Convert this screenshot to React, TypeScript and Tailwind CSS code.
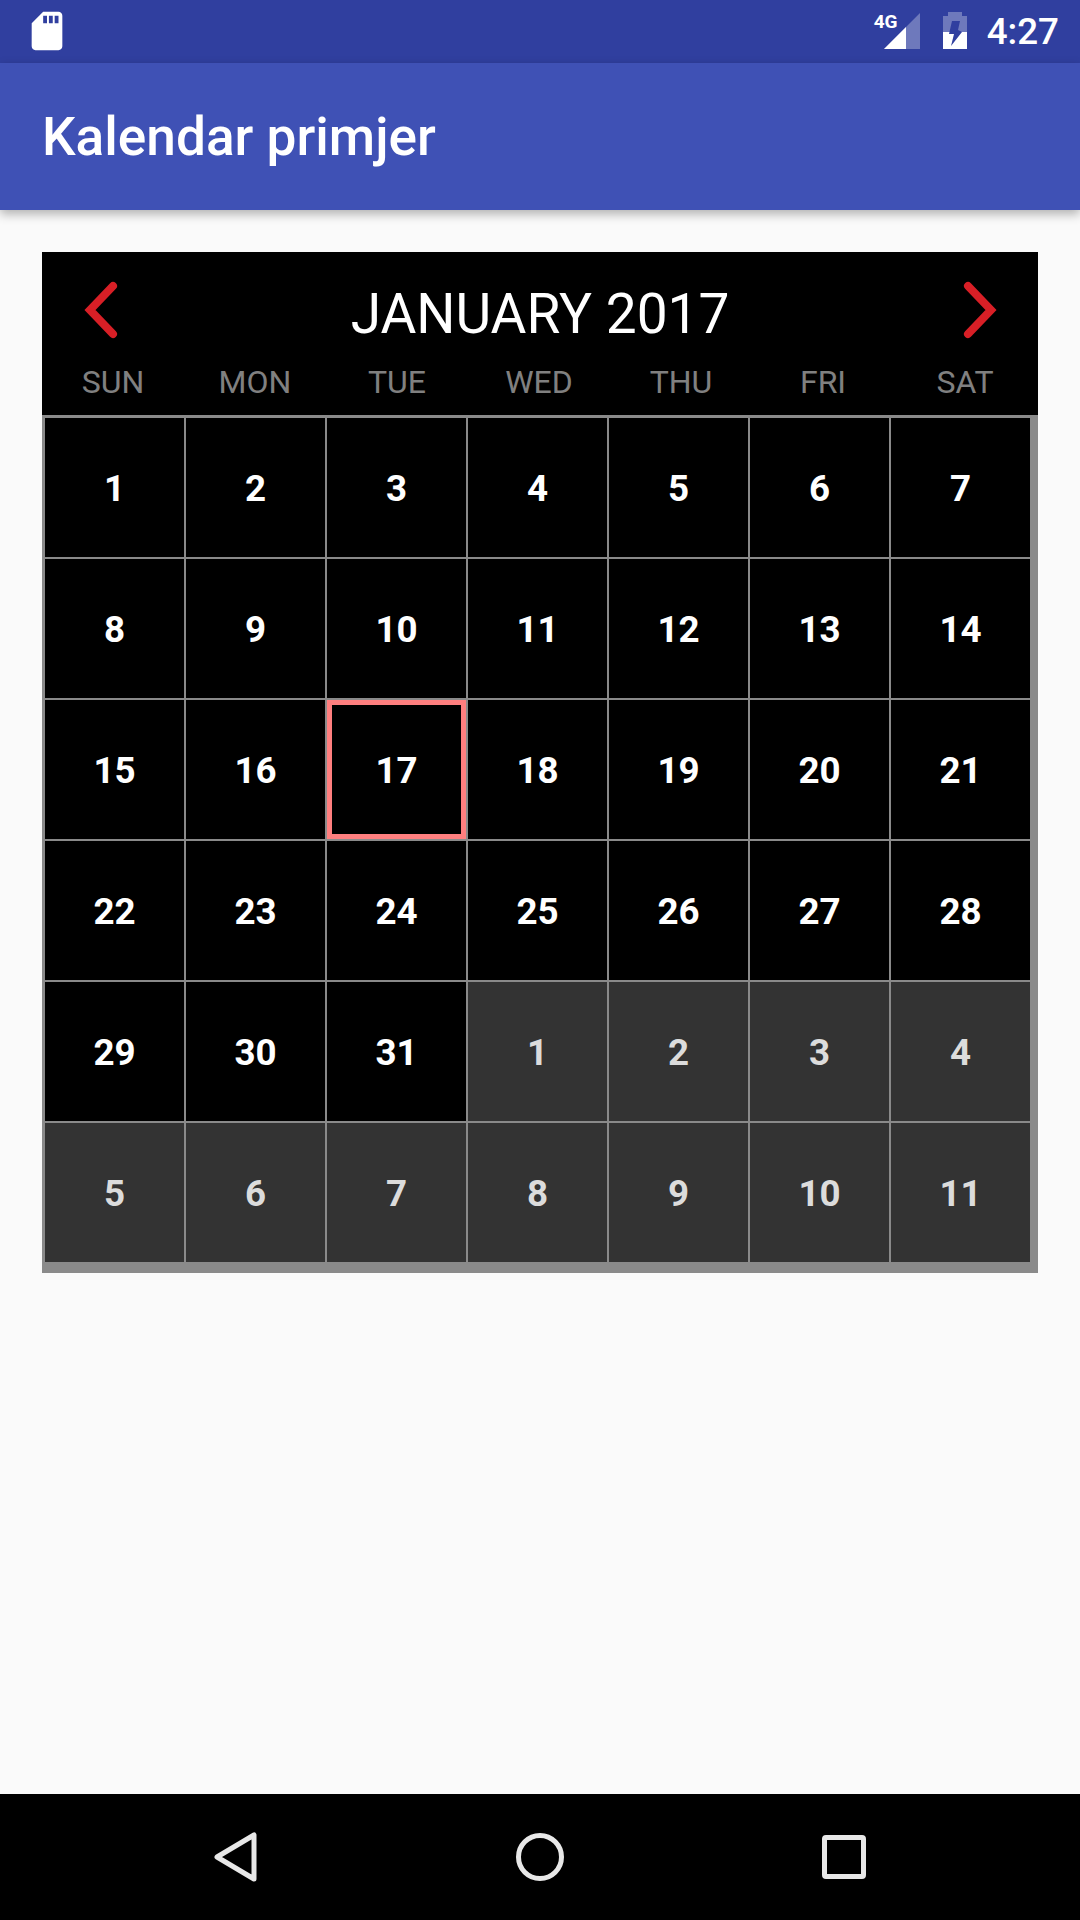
const dayNames = ["SUN", "MON", "TUE", "WED", "THU", "FRI", "SAT"];

const january = Array.from({ length: 31 }, (_, i) => i + 1);
const february = Array.from({ length: 11 }, (_, i) => i + 1);
const TODAY = 17;

function StatusBar() {
    return (
        <div className="flex h-[63px] items-center justify-between bg-[#303F9F] pl-[24px] pr-[21px]">
            <svg width="46" height="46" viewBox="0 0 24 24" className="-mt-[1px]" fill="#fff">
                <path d="M18 2h-8L4.02 8 4 20c0 1.1.9 2 2 2h12c1.1 0 2-.9 2-2V4c0-1.1-.9-2-2-2zm-6 6h-2V4h2v4zm3 0h-2V4h2v4zm3 0h-2V4h2v4z" />
            </svg>
            <div className="flex items-center">
                <div className="relative h-[63px] w-[46px]">
                    <span className="absolute -left-[1px] top-[11px] font-['Roboto'] text-[19px] font-bold leading-[21px] text-white">4G</span>
                    <svg width="46" height="63" viewBox="0 0 46 63" className="absolute left-0 top-0">
                        <polygon points="9,49 45,13 45,49" fill="#fff" fillOpacity="0.3" />
                        <polygon points="9,49 31,27 31,49" fill="#fff" />
                    </svg>
                </div>
                <svg width="24" height="63" viewBox="0 0 24 63" className="ml-[22px]">
                    <path d="M5 12h14v4h5v33H0V16h5z" fill="#fff" fillOpacity="0.3" />
                    <path d="M0 32h24v17H0z" fill="#fff" />
                    <polygon points="9,21 17,21 15,30 19,32 8,46 11,34 6,34" fill="#303F9F" />
                </svg>
                <span className="ml-[20px] font-['Roboto'] text-[36.75px] font-medium leading-[63px] text-white">4:27</span>
            </div>
        </div>
    );
}

function Chevron({ points }: { points: string }) {
    return (
        <svg width="40" height="70" viewBox="0 0 40 70" fill="none">
            <polyline points={points} stroke="#D81F26" strokeWidth="8" strokeLinecap="round" strokeLinejoin="miter" />
        </svg>
    );
}

function DayCell({ day, muted, today }: { day: number; muted?: boolean; today?: boolean }) {
    return (
        <div
            className={`flex h-[139px] items-center justify-center pt-[4px] font-['Roboto'] text-[36.75px] font-bold leading-none
                ${muted ? "bg-[#333333] text-[#dcdcdc]" : "bg-black text-white"}
                ${today ? "border-[5px] border-[#FF7F7F]" : ""}`}
        >
            {day}
        </div>
    );
}

function Calendar() {
    return (
        <div className="w-[996px]">
            {/* Header */}
            <div className="h-[163px] bg-black">
                <div className="flex h-[116px] items-center justify-between px-[36px]">
                    <Chevron points="35,11 12,35 35,59" />
                    <span className="mt-[8px] font-['Roboto'] text-[55px] leading-none text-white">JANUARY 2017</span>
                    <Chevron points="6,11 29,35 6,59" />
                </div>
                <div className="-mt-[3px] grid grid-cols-7 pr-[2px]">
                    {dayNames.map((name) => (
                        <div key={name} className="text-center font-['Roboto'] text-[32px] leading-[34px] text-[#808080]">
                            {name}
                        </div>
                    ))}
                </div>
            </div>

            {/* Days */}
            <div className="grid grid-cols-[repeat(7,139px)] gap-[2px] bg-[#8A8A8A] pb-[11px] pl-[3px] pr-[8px] pt-[3px]">
                {january.map((day) => (
                    <DayCell key={day} day={day} today={day === TODAY} />
                ))}
                {february.map((day) => (
                    <DayCell key={`next-${day}`} day={day} muted />
                ))}
            </div>
        </div>
    );
}

function NavBar() {
    return (
        <div className="flex h-[126px] items-center justify-center bg-black">
            <div className="grid grid-cols-[repeat(3,304px)] justify-items-center">
                <svg width="48" height="54" viewBox="0 0 48 54" fill="none" stroke="#E8E8E8" strokeWidth="5" strokeLinejoin="round">
                    <polygon points="5,27 42,5 42,49" />
                </svg>
                <svg width="54" height="54" viewBox="0 0 54 54" fill="none" stroke="#E8E8E8" strokeWidth="5">
                    <circle cx="27" cy="27" r="21.5" />
                </svg>
                <svg width="54" height="54" viewBox="0 0 54 54" fill="none" stroke="#E8E8E8" strokeWidth="5" strokeLinejoin="round">
                    <rect x="7.5" y="7.5" width="39" height="39" rx="1.5" />
                </svg>
            </div>
        </div>
    );
}

export default function App() {
    return (
        <div className="flex h-[1920px] w-[1080px] flex-col overflow-hidden bg-[#FAFAFA]">
            <StatusBar />
            <header className="relative z-10 flex h-[147px] items-center bg-[#3F51B5] px-[42px] pt-[3px] shadow-[0_4px_10px_rgba(0,0,0,0.3)]">
                <h1 className="font-['Roboto'] text-[53.2px] font-medium leading-none text-white">Kalendar primjer</h1>
            </header>
            <main className="flex-1 px-[42px] pt-[42px]">
                <Calendar />
            </main>
            <NavBar />
        </div>
    );
}
